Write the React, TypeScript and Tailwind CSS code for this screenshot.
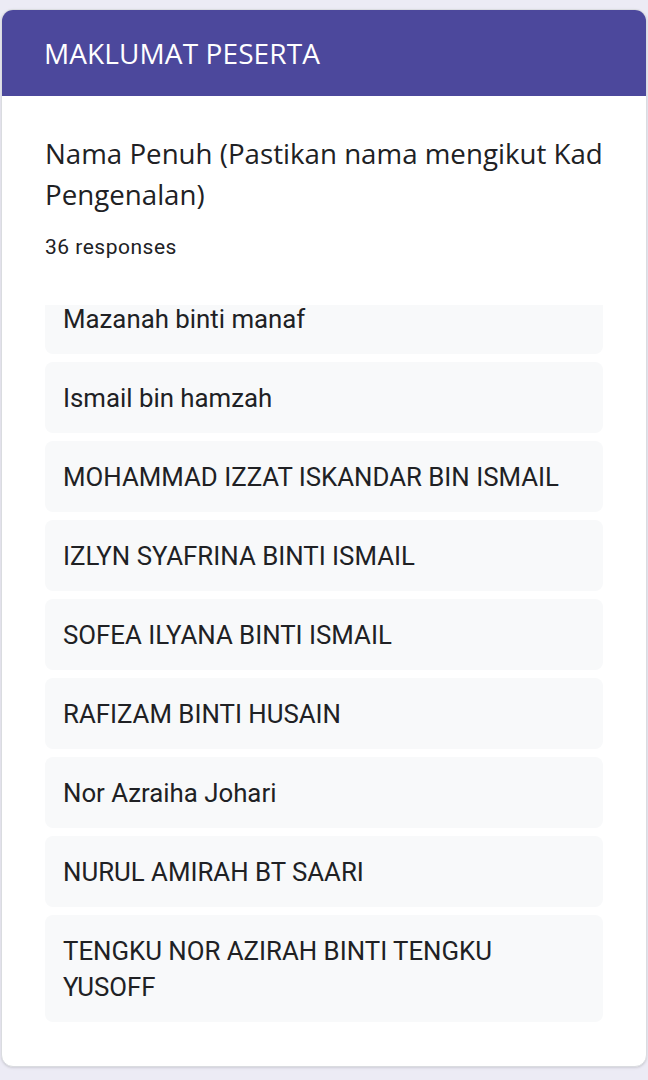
import React from 'react';

const names = [
  'Mazanah binti manaf',
  'Ismail bin hamzah',
  'MOHAMMAD IZZAT ISKANDAR BIN ISMAIL',
  'IZLYN SYAFRINA BINTI ISMAIL',
  'SOFEA ILYANA BINTI ISMAIL',
  'RAFIZAM BINTI HUSAIN',
  'Nor Azraiha Johari',
  'NURUL AMIRAH BT SAARI',
  'TENGKU NOR AZIRAH BINTI TENGKU YUSOFF',
];

const App: React.FC = () => {
  return (
    <div className="min-h-[1080px] bg-[#ecebf5] pt-[9px] px-px pb-3">
      <div className="rounded-[12px] bg-white border border-[#dadce0] overflow-hidden shadow-sm">
        <div className="bg-[#4c489c] h-[86px] flex items-center px-[42px]">
          <h1 className="text-white text-[28px] font-['Open_Sans',sans-serif] tracking-[0.1px]">
            MAKLUMAT PESERTA
          </h1>
        </div>

        <div className="px-[43px] pt-[37px] pb-[44px]">
          <h2 className="text-[#202124] text-[27.7px] leading-[41px] font-['Open_Sans',sans-serif]">
            Nama Penuh (Pastikan nama mengikut Kad Pengenalan)
          </h2>
          <p className="mt-[17px] text-[#202124] text-[21px] tracking-[0.5px] font-['Roboto',sans-serif]">
            36 responses
          </p>

          <div className="mt-[41px] overflow-hidden">
            <div className="-mt-[22px] flex flex-col gap-[8px]">
              {names.map((n) => (
                <div
                  key={n}
                  className="bg-[#f8f9fa] rounded-[8px] px-[18px] pt-[18px] pb-[17px] text-[#202124] text-[25.8px] leading-[36px] font-['Roboto',sans-serif]"
                >
                  {n}
                </div>
              ))}
            </div>
          </div>
        </div>
      </div>
    </div>
  );
};

export default App;
